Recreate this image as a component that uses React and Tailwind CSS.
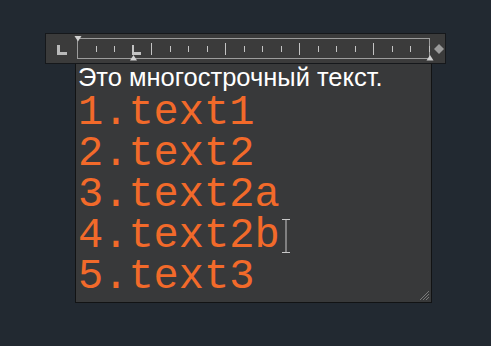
import React from 'react'

const ticks = Array.from({ length: 19 }, (_, i) => i + 1)

function Ruler() {
  return (
    <div className="w-[401px] h-[31px] bg-[#3b3b3b] border border-[#16181b]">
      <svg width="399" height="29" viewBox="0 0 399 29" className="block">
        {/* left tab-type icon */}
        <path d="M11 11h3v7h7v3H11z" fill="#b9b9b9" />
        {/* scale frame */}
        <rect x="31.5" y="4.5" width="352" height="20" fill="none" stroke="#9c9c9c" strokeWidth="1" />
        {ticks.map((k) => {
          if (k === 3) return null
          const x = Math.round(31 + k * 18.5) + 0.5
          const tall = k % 4 === 0
          return (
            <line
              key={k}
              x1={x}
              x2={x}
              y1={tall ? 9 : 12}
              y2={tall ? 21 : 18}
              stroke="#c4c4c4"
              strokeWidth="1"
            />
          )
        })}
        {/* tab stop */}
        <path d="M86 11h2v7h7v3h-9z" fill="#c2c2c2" />
        {/* indent markers */}
        <path d="M28.5 2h7l-3.5 5.5z" fill="#d0d0d0" />
        <path d="M84 26.5h7l-3.5-5.5z" fill="#d0d0d0" />
        <path d="M380.5 26.5h7l-3.5-5.5z" fill="#d0d0d0" />
        {/* diamond */}
        <path d="M393 10l5 5-5 5-5-5z" fill="#9a9a9a" />
      </svg>
    </div>
  )
}

export default function App() {
  const lines = ['1.text1', '2.text2', '3.text2a', '4.text2b', '5.text3']
  return (
    <div className="w-[491px] h-[346px] bg-[#222931] pt-[33px] pl-[45px]">
      <Ruler />
      <div className="relative ml-[30px] w-[357px] h-[239px] bg-[#38393a] border border-t-0 border-[#121314] pl-[2px]">
        <div
          className="text-white text-[25.5px] leading-[27px] whitespace-nowrap"
          style={{ fontFamily: '"Liberation Sans", Arial, sans-serif' }}
        >
          Это многострочный текст.
        </div>
        <div
          className="mt-[2px] text-[#f26a2a] text-[42px] leading-[41px]"
          style={{ fontFamily: '"Liberation Mono", "Courier New", monospace' }}
        >
          {lines.map((t, i) => (
            <div key={t} className="whitespace-pre">
              {t}
              {i === 3 && (
                <span className="inline-block align-middle ml-[2px] w-[8px] h-[34px]">
                  <svg width="8" height="34" viewBox="0 0 8 34" className="block">
                    <path d="M0 0.5h8M4 0.5v33M0 33.5h8" stroke="#c8c8c8" strokeWidth="1" fill="none" />
                  </svg>
                </span>
              )}
            </div>
          ))}
        </div>
        <svg width="11" height="11" viewBox="0 0 11 11" className="absolute right-[1px] bottom-[1px]">
          <path d="M1 10L10 1M4 10L10 4M7 10L10 7" stroke="#7a7a7a" strokeWidth="1" />
        </svg>
      </div>
    </div>
  )
}
